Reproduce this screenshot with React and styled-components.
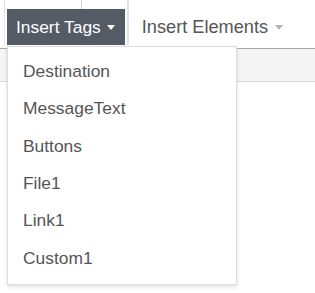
import * as React from 'react'
import styled, { createGlobalStyle } from 'styled-components'

const GlobalStyle = createGlobalStyle`
  html, body {
    margin: 0;
    padding: 0;
    background: #fff;
    font-family: "Liberation Sans", Arial, sans-serif;
  }
`

const Page = styled.div`
  position: relative;
  width: 315px;
  height: 293px;
  overflow: hidden;
  background: #fff;
`

const Toolbar = styled.div`
  display: flex;
  align-items: stretch;
  height: 48px;
  padding-left: 4px;
  border-bottom: 1px solid #a9a9a9;
  background: #fff;
`

const Group = styled.div`
  position: relative;
  display: flex;
  flex-direction: column;
  height: 45px;
  padding: 0 2px;
  border-left: 1px solid #e3e3e3;
  border-right: ${(p) => (p.$last ? 'none' : '1px solid #e3e3e3')};
`

const TopStrip = styled.div`
  display: flex;
  height: 9px;
`

const StripCell = styled.div`
  width: ${(p) => p.$w}px;
  border-right: ${(p) => (p.$divider ? '1px solid #d6d6d6' : 'none')};
`

const ToolButton = styled.button`
  display: flex;
  align-items: center;
  gap: ${(p) => (p.$active ? 6 : 7)}px;
  height: 36px;
  padding: 0 ${(p) => (p.$active ? '10px 0 9px' : '11px 0 11px')};
  border: none;
  border-radius: 0;
  background: ${(p) => (p.$active ? '#545b65' : 'transparent')};
  color: ${(p) => (p.$active ? '#fff' : '#555')};
  font-family: "Liberation Sans", Arial, sans-serif;
  font-size: ${(p) => (p.$active ? 17.4 : 18.2)}px;
  cursor: pointer;
`

const Caret = styled.span`
  width: 0;
  height: 0;
  border-left: 4.5px solid transparent;
  border-right: 4.5px solid transparent;
  border-top: 5px solid ${(p) => (p.$active ? '#fff' : '#b3b3b3')};
  margin-top: 1px;
`

const SubBar = styled.div`
  height: 32px;
  background: #f5f5f5;
  border-bottom: 1px solid #d9d9d9;
`

const Menu = styled.ul`
  position: absolute;
  top: 46px;
  left: 7px;
  width: 228px;
  margin: 0;
  padding: 6px 0 7px;
  list-style: none;
  background: #fff;
  border: 1px solid #dcdcdc;
  box-shadow: 0 2px 4px rgba(0, 0, 0, 0.12);
`

const MenuItem = styled.li`
  height: 37.3px;
  display: flex;
  align-items: center;
  padding-left: 15px;
  color: #555;
  font-size: 17.4px;
  cursor: pointer;
`

const tags = ['Destination', 'MessageText', 'Buttons', 'File1', 'Link1', 'Custom1']

export default function App() {
  return (
    <Page>
      <GlobalStyle />
      <Toolbar>
        <Group>
          <TopStrip>
            <StripCell $w={74} $divider />
          </TopStrip>
          <ToolButton $active>
            Insert Tags
            <Caret $active />
          </ToolButton>
        </Group>
        <Group $last>
          <TopStrip />
          <ToolButton>
            Insert Elements
            <Caret />
          </ToolButton>
        </Group>
      </Toolbar>
      <SubBar />
      <Menu>
        {tags.map((t) => (
          <MenuItem key={t}>{t}</MenuItem>
        ))}
      </Menu>
    </Page>
  )
}
